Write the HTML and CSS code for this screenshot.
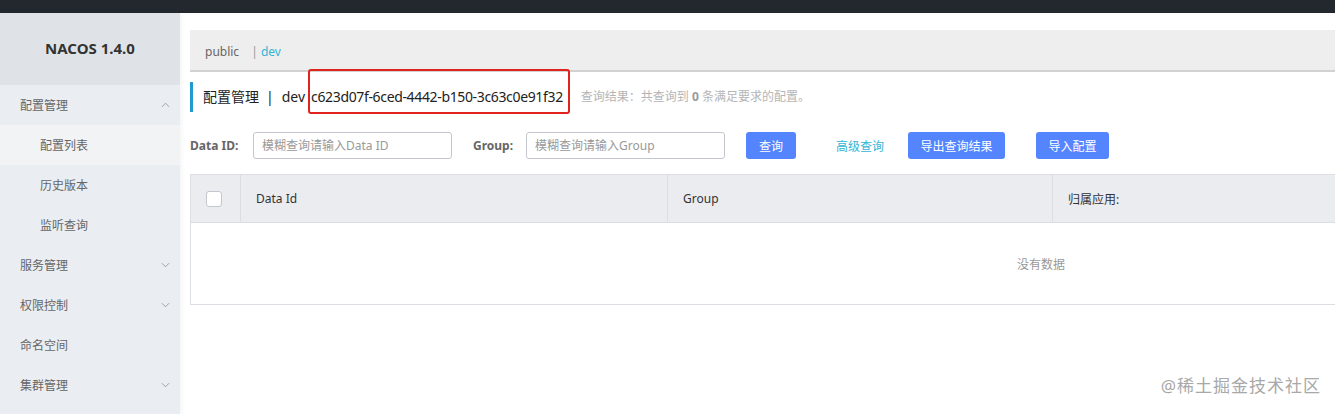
FILE: index.html
```html
<!DOCTYPE html>
<html lang="zh-CN">
<head>
    <meta charset="UTF-8">
    <title>Nacos</title>
    <link rel="stylesheet" href="styles.css">
</head>
<body>
    <div class="topbar"></div>
    <div class="layout">
        <div class="sidebar">
            <div class="brand">NACOS 1.4.0</div>
            <ul class="menu">
                <li class="menu-item">配置管理
                    <svg class="arrow" viewBox="0 0 10 6"><path d="M1 5 L5 1 L9 5" fill="none" stroke="#999" stroke-width="1"/></svg>
                </li>
                <li class="menu-item sub active">配置列表</li>
                <li class="menu-item sub">历史版本</li>
                <li class="menu-item sub">监听查询</li>
                <li class="menu-item">服务管理
                    <svg class="arrow" viewBox="0 0 10 6"><path d="M1 1 L5 5 L9 1" fill="none" stroke="#999" stroke-width="1"/></svg>
                </li>
                <li class="menu-item">权限控制
                    <svg class="arrow" viewBox="0 0 10 6"><path d="M1 1 L5 5 L9 1" fill="none" stroke="#999" stroke-width="1"/></svg>
                </li>
                <li class="menu-item">命名空间</li>
                <li class="menu-item">集群管理
                    <svg class="arrow" viewBox="0 0 10 6"><path d="M1 1 L5 5 L9 1" fill="none" stroke="#999" stroke-width="1"/></svg>
                </li>
            </ul>
        </div>

        <div class="main">
            <div class="ns-bar">
                <span class="ns">public</span>
                <span class="ns-sep">|</span><span class="ns current">dev</span>
            </div>

            <div class="title-row">
                <span class="title">配置管理</span>
                <span class="title-sep">|</span>
                <span class="title">dev</span>
                <span class="ns-id">c623d07f-6ced-4442-b150-3c63c0e91f32</span>
                <span class="result">查询结果：共查询到 <b>0</b> 条满足要求的配置。</span>
            </div>

            <div class="search-row">
                <label class="label">Data ID:</label>
                <input class="input" type="text" placeholder="模糊查询请输入Data ID">
                <label class="label group-label">Group:</label>
                <input class="input" type="text" placeholder="模糊查询请输入Group">
                <button class="btn btn-query">查询</button>
                <a class="link">高级查询</a>
                <button class="btn btn-export">导出查询结果</button>
                <button class="btn btn-import">导入配置</button>
            </div>

            <table class="table">
                <thead>
                    <tr>
                        <th class="col-check"><span class="checkbox"></span></th>
                        <th class="col-id">Data Id</th>
                        <th class="col-group">Group</th>
                        <th class="col-app">归属应用:</th>
                    </tr>
                </thead>
                <tbody>
                    <tr>
                        <td class="empty" colspan="4">没有数据</td>
                    </tr>
                </tbody>
            </table>
        </div>
    </div>
    <div class="watermark">@稀土掘金技术社区</div>
</body>
</html>
```

FILE: styles.css
```css
body {
    margin: 0;
    width: 1335px;
    height: 414px;
    overflow: hidden;
    position: relative;
    font-family: "Noto Sans", "Noto Sans CJK SC", sans-serif;
    font-size: 12px;
    color: #333;
    background: #fff;
}
.topbar {
    height: 13px;
    background-color: #23282e;
}
.layout {
    display: flex;
    height: 401px;
}
.sidebar {
    width: 180px;
    flex-shrink: 0;
    background-color: #eaedf1;
    box-shadow: 2px 0 4px rgba(0,0,0,0.04);
    position: relative;
    z-index: 1;
}
.brand {
    height: 72px;
    line-height: 70px;
    text-align: center;
    font-weight: bold;
    font-size: 15px;
    color: #333;
    background-color: #dfe3e7;
}
.menu {
    list-style: none;
    margin: 0;
    padding: 0;
}
.menu-item {
    height: 40px;
    line-height: 42px;
    padding-left: 20px;
    color: #666;
    font-size: 12px;
    position: relative;
}
.menu-item.sub {
    padding-left: 40px;
}
.menu-item.active {
    background-color: #f2f3f5;
}
.arrow {
    position: absolute;
    right: 10px;
    top: 17px;
    width: 9px;
    height: 6px;
}
.main {
    flex-shrink: 0;
    width: 1702px;
    padding: 17px 0 0 10px;
}
.ns-bar {
    height: 40px;
    line-height: 43px;
    background-color: #eeeeee;
    border-bottom: 2px solid #d2d2d2;
    padding-left: 15px;
    font-size: 12px;
}
.ns {
    color: #666;
}
.ns-sep {
    color: #999;
    margin-left: 9px;
    margin-right: 3px;
}
.ns.current {
    color: #33b5d5;
}
.title-row {
    margin-top: 10px;
    height: 30px;
    line-height: 30px;
    border-left: 3px solid #1f9bd0;
    padding-left: 10px;
    display: flex;
    align-items: center;
    font-size: 14px;
    color: #222;
}
.title-sep {
    margin: 0 8px 0 7px;
}
.ns-id {
    margin-left: 6px;
    letter-spacing: -0.35px;
    position: relative;
}
.ns-id::after {
    content: "";
    position: absolute;
    left: -3px;
    right: -7px;
    top: -13px;
    bottom: -2px;
    border: 2px solid #e0231c;
    border-radius: 3px;
}
.result {
    margin-left: 18px;
    font-size: 12px;
    color: #b5b5b5;
}
.result b {
    color: #999;
}
.search-row {
    display: flex;
    align-items: center;
    margin-top: 20px;
    height: 27px;
}
.label {
    font-weight: bold;
    font-size: 12px;
    color: #666;
    width: 63px;
}
.group-label {
    margin-left: 21px;
    width: 53px;
}
.input {
    box-sizing: border-box;
    width: 199px;
    height: 27px;
    border: 1px solid #c4c6cf;
    border-radius: 3px;
    padding: 0 8px;
    font-family: inherit;
    font-size: 12px;
    outline: none;
}
.input::placeholder {
    color: #999;
}
.btn {
    height: 27px;
    border: none;
    border-radius: 3px;
    background-color: #5584ff;
    color: #fff;
    font-family: inherit;
    font-size: 12px;
    padding: 0 13px;
}
.btn-query {
    margin-left: 21px;
    width: 50px;
    padding: 0;
}
.link {
    margin-left: 40px;
    color: #33b5d5;
    font-size: 12px;
}
.btn-export {
    margin-left: 24px;
    width: 97px;
    padding: 0;
}
.btn-import {
    margin-left: 31px;
    width: 73px;
    padding: 0;
}
.table {
    margin-top: 15px;
    width: 1702px;
    border-collapse: collapse;
    border: 1px solid #dcdee3;
    font-size: 12px;
}
.table th {
    height: 47px;
    background-color: #ebecf0;
    font-weight: normal;
    text-align: left;
    padding: 0 0 0 15px;
    color: #333;
    border-left: 1px solid #dcdee3;
    border-bottom: 1px solid #dcdee3;
}
.table th.col-check {
    width: 34px;
    border-left: none;
}
.col-id {
    width: 411px;
}
.col-group {
    width: 369px;
}
.checkbox {
    display: block;
    box-sizing: border-box;
    width: 16px;
    height: 16px;
    background: #fff;
    border: 1px solid #c4c6cf;
    border-radius: 3px;
}
.empty {
    height: 79px;
    text-align: center;
    color: #999;
}
.watermark {
    position: absolute;
    right: 14px;
    bottom: 17px;
    font-size: 17px;
    color: #a8a8a8;
    letter-spacing: 1px;
}
```
